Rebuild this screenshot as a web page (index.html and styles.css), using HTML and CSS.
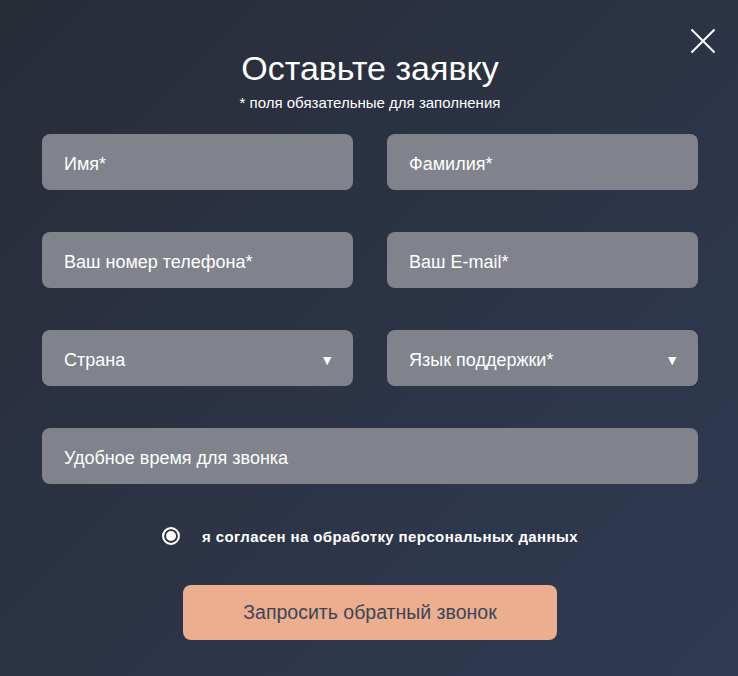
FILE: index.html
```html
<!DOCTYPE html>
<html lang="ru">
<head>
<meta charset="UTF-8" />
<meta name="viewport" content="width=device-width, initial-scale=1" />
<title>Оставьте заявку</title>
<link rel="stylesheet" href="styles.css">
</head>
<body>
  <main class="modal" aria-label="Оставьте заявку">
    <button type="button" class="close" aria-label="Закрыть">
      <svg width="26" height="26" viewBox="0 0 26 26" aria-hidden="true">
        <path d="M1.5 1.5 L24.5 24.5 M24.5 1.5 L1.5 24.5" stroke="#fff" stroke-width="2" fill="none" />
      </svg>
    </button>

    <h1>Оставьте заявку</h1>
    <p class="note">* поля обязательные для заполнения</p>

    <form class="form" id="requestForm">
      <div class="field">Имя*</div>
      <div class="field">Фамилия*</div>
      <div class="field">Ваш номер телефона*</div>
      <div class="field">Ваш E-mail*</div>
      <div class="field select">Страна<span class="arrow">&#9660;</span></div>
      <div class="field select">Язык поддержки*<span class="arrow">&#9660;</span></div>
      <div class="field wide">Удобное время для звонка</div>

      <label class="agree">
        <span class="radio"></span>
        я согласен на обработку персональных данных
      </label>

      <button type="submit" class="submit">Запросить обратный звонок</button>
    </form>
  </main>
</body>
</html>
```

FILE: styles.css
```css
body {
  margin: 0;
  font-family: "Liberation Sans", Arial, sans-serif;
  background: linear-gradient(135deg, #282c37, #2f3b53);
  height: 676px;
  overflow: hidden;
}
.modal {
  position: relative;
  padding: 48px 40px 0 42px;
  color: #fff;
}
.close {
  position: absolute;
  top: 28px;
  right: 22px;
  padding: 0;
  border: none;
  background: none;
  cursor: pointer;
}
.close svg {
  display: block;
}
h1 {
  margin: 0;
  font-size: 34px;
  font-weight: 400;
  line-height: 40px;
  text-align: center;
}
.note {
  margin: 6px 0 0;
  font-size: 15px;
  line-height: 18px;
  text-align: center;
}
.form {
  margin-top: 22px;
  display: grid;
  grid-template-columns: 1fr 1fr;
  column-gap: 34px;
  row-gap: 42px;
}
.field {
  height: 56px;
  box-sizing: border-box;
  padding: 4px 19px 0 22px;
  display: flex;
  align-items: center;
  justify-content: space-between;
  background: #80838b;
  border-radius: 8px;
  font-size: 18px;
  color: #fff;
}
.field.wide {
  grid-column: 1 / 3;
}
.arrow {
  font-size: 14px;
}
.agree {
  grid-column: 1 / 3;
  margin-top: 1px;
  display: flex;
  align-items: center;
  justify-content: center;
  gap: 22px;
  font-size: 15px;
  font-weight: 700;
  letter-spacing: 0.4px;
  cursor: pointer;
}
.radio {
  width: 14px;
  height: 14px;
  border: 2px solid #fff;
  border-radius: 50%;
  box-shadow: inset 0 0 0 2px #2b303f;
  background: #fff;
}
.submit {
  grid-column: 1 / 3;
  justify-self: center;
  margin-top: -2px;
  width: 374px;
  height: 55px;
  border: none;
  border-radius: 8px;
  background: #ebae8e;
  color: #3d4557;
  font-family: "Liberation Sans", Arial, sans-serif;
  font-size: 19.5px;
  cursor: pointer;
}
```
